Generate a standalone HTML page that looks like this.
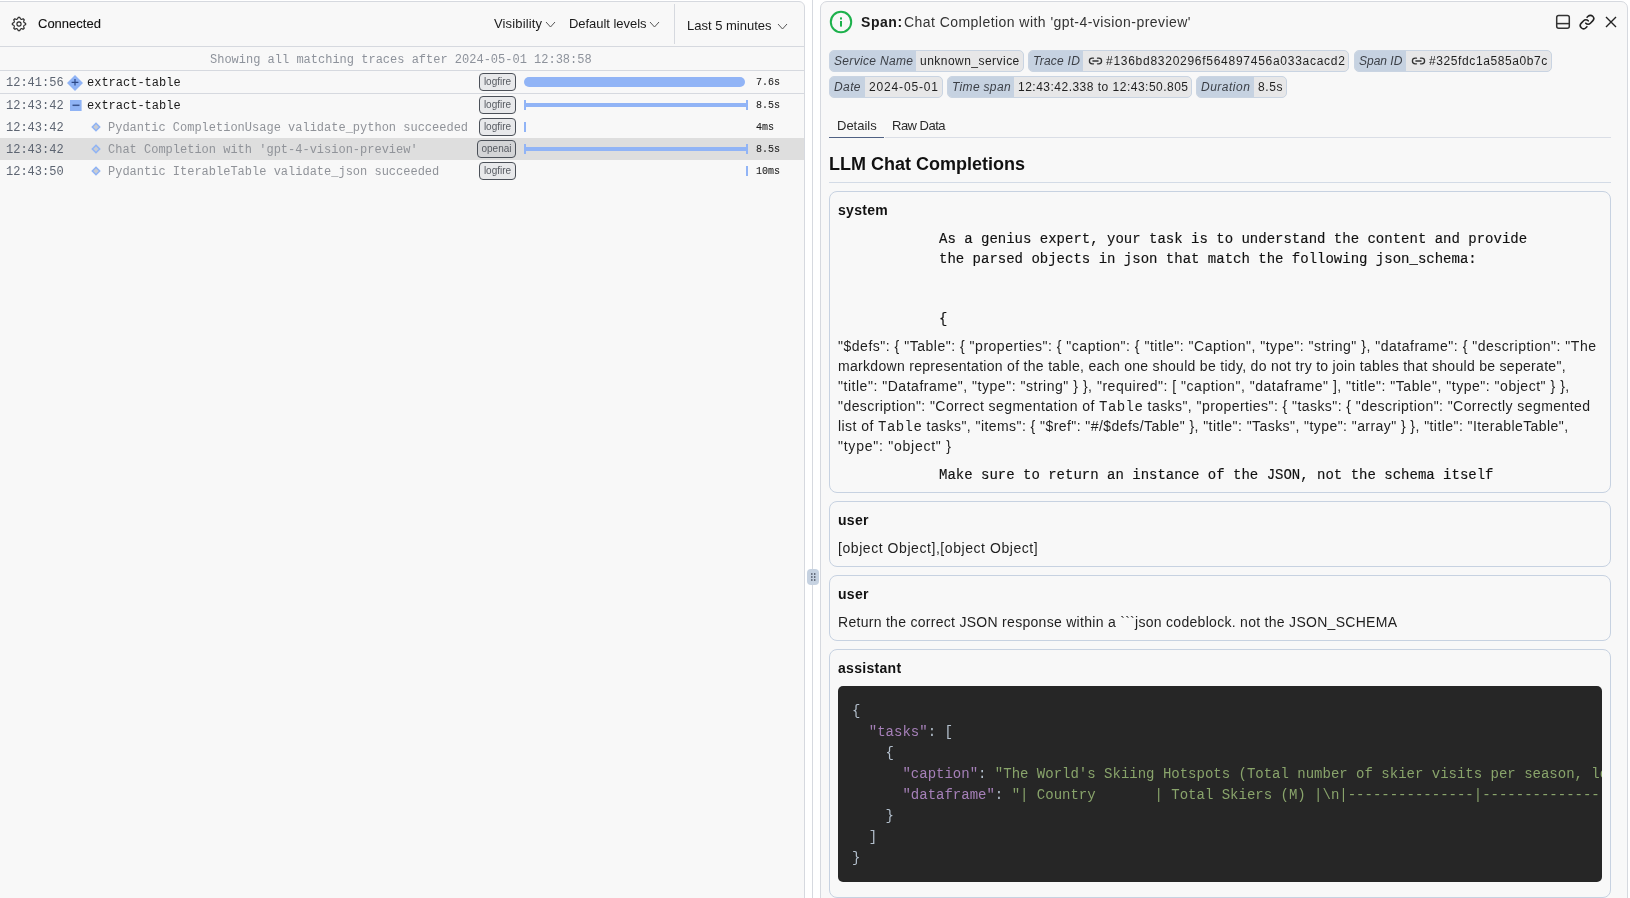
<!DOCTYPE html>
<html><head><meta charset="utf-8">
<style>
*{box-sizing:border-box;margin:0;padding:0}
html,body{width:1630px;height:898px;overflow:hidden;background:#fff;font-family:"Liberation Sans",sans-serif;color:#1f1f1f;position:relative}
.abs{position:absolute}
.mono{font-family:"Liberation Mono",monospace}
.t{position:absolute;white-space:pre;will-change:transform}
</style></head><body>
<div class="abs" style="left:-1px;top:1px;width:806px;height:1000px;border:1px solid #d6d9df;border-radius:0 6px 0 0;background:#f8f8f8"></div>
<div class="abs" style="left:812px;top:0px;width:1px;height:898px;background:#d6d9df"></div>
<div class="abs" style="left:820px;top:1px;width:808px;height:1000px;border:1px solid #d6d9df;border-radius:7px 7px 0 0;background:#f8f8f8"></div>
<div class="abs" style="left:807px;top:569px;width:12px;height:16px;border-radius:4px;background:#c6d2e1"></div>
<svg class="abs" style="left:807px;top:569px" width="12" height="16"><g fill="#3b4250"><rect x="4.1" y="4.3" width="1.4" height="1.4"/><rect x="7.0" y="4.3" width="1.4" height="1.4"/><rect x="4.1" y="7.3" width="1.4" height="1.4"/><rect x="7.0" y="7.3" width="1.4" height="1.4"/><rect x="4.1" y="10.3" width="1.4" height="1.4"/><rect x="7.0" y="10.3" width="1.4" height="1.4"/></g></svg>
<svg class="abs" style="left:9.5px;top:15.4px" width="18" height="18" viewBox="0 0 18 18" fill="none" stroke="#222" stroke-width="1.1" stroke-linejoin="round"><path d="M8.18 2.35A6.7 6.7 0 0 1 9.82 2.35Q10.44 5.54 13.12 3.72A6.7 6.7 0 0 1 14.28 4.88Q12.46 7.56 15.65 8.18A6.7 6.7 0 0 1 15.65 9.82Q12.46 10.44 14.28 13.12A6.7 6.7 0 0 1 13.12 14.28Q10.44 12.46 9.82 15.65A6.7 6.7 0 0 1 8.18 15.65Q7.56 12.46 4.88 14.28A6.7 6.7 0 0 1 3.72 13.12Q5.54 10.44 2.35 9.82A6.7 6.7 0 0 1 2.35 8.18Q5.54 7.56 3.72 4.88A6.7 6.7 0 0 1 4.88 3.72Q7.56 5.54 8.18 2.35Z"/><circle cx="9" cy="9" r="2.1"/></svg>
<div class="t" style="left:38px;top:17.20px;font:normal normal 13px/13px 'Liberation Sans',sans-serif;color:#111;letter-spacing:0px;-webkit-text-stroke:0.1px #111">Connected</div>
<div class="t" style="left:494px;top:17.30px;font:normal normal 13px/13px 'Liberation Sans',sans-serif;color:#1a1a1a;letter-spacing:0.15px;">Visibility</div>
<svg class="abs" style="left:544.5px;top:20.5px" width="11" height="7"><path d="M1 1L5.5 6L10 1" fill="none" stroke="#555" stroke-width="1"/></svg>
<div class="t" style="left:569.4px;top:17.30px;font:normal normal 13px/13px 'Liberation Sans',sans-serif;color:#1a1a1a;letter-spacing:-0.04px;">Default levels</div>
<svg class="abs" style="left:648.5px;top:20.5px" width="11" height="7"><path d="M1 1L5.5 6L10 1" fill="none" stroke="#555" stroke-width="1"/></svg>
<div class="abs" style="left:674px;top:4px;width:1px;height:40px;background:#d6d9df"></div>
<div class="t" style="left:686.5px;top:19.20px;font:normal normal 13px/13px 'Liberation Sans',sans-serif;color:#1a1a1a;letter-spacing:0px;">Last 5 minutes</div>
<svg class="abs" style="left:776.5px;top:23px" width="11" height="7"><path d="M1 1L5.5 6L10 1" fill="none" stroke="#555" stroke-width="1"/></svg>
<div class="abs" style="left:0px;top:46px;width:804px;height:1px;background:#d6d9df"></div>
<div class="t" style="left:210px;top:53.50px;font:normal normal 12px/12px 'Liberation Mono',monospace;color:#8d929b;letter-spacing:0px;">Showing all matching traces after 2024-05-01 12:38:58</div>
<div class="abs" style="left:0px;top:70px;width:804px;height:1px;background:#d6d9df"></div>
<div class="abs" style="left:0px;top:138px;width:804px;height:22px;background:#dedede"></div>
<div class="abs" style="left:0px;top:93px;width:804px;height:1px;background:#d6d9df"></div>
<div class="t" style="left:6px;top:77.40px;font:normal normal 12px/12px 'Liberation Mono',monospace;color:#5d6572;letter-spacing:0px;">12:41:56</div>
<svg class="abs" style="left:67.3px;top:74.5px" width="16" height="16"><path d="M8 0L16 8L8 16L0 8Z" fill="#8fb3f5"/><path d="M4.6 7.4H11.4M8 4V10.6" stroke="#2b4785" stroke-width="1.2"/></svg>
<div class="t" style="left:87.2px;top:77.40px;font:normal normal 12px/12px 'Liberation Mono',monospace;color:#1a1a1a;letter-spacing:0px;">extract-table</div>
<div class="abs" style="left:479px;top:73px;width:37px;height:18px;border:1.5px solid #4b5058;border-radius:4px;background:#e8e9eb;font:10px/15.5px 'Liberation Sans',sans-serif;color:#575b62;text-align:center;will-change:transform">logfire</div>
<div class="abs" style="left:524px;top:77px;width:221px;height:10px;background:#91b4f6;border-radius:5px"></div>
<div class="t" style="left:756px;top:77.83px;font:normal normal 10px/10px 'Liberation Mono',monospace;color:#1f1f1f;letter-spacing:0px;-webkit-text-stroke:0.1px #1f1f1f">7.6s</div>
<div class="t" style="left:6px;top:100.40px;font:normal normal 12px/12px 'Liberation Mono',monospace;color:#5d6572;letter-spacing:0px;">12:43:42</div>
<svg class="abs" style="left:69.5px;top:100px" width="12" height="11"><rect x="0" y="0" width="11.6" height="11" fill="#8fb3f5"/><path d="M2.5 5.3H9.5" stroke="#3a5590" stroke-width="1.5"/></svg>
<div class="t" style="left:87.2px;top:100.40px;font:normal normal 12px/12px 'Liberation Mono',monospace;color:#1a1a1a;letter-spacing:0px;">extract-table</div>
<div class="abs" style="left:479px;top:96px;width:37px;height:18px;border:1.5px solid #4b5058;border-radius:4px;background:#e8e9eb;font:10px/15.5px 'Liberation Sans',sans-serif;color:#575b62;text-align:center;will-change:transform">logfire</div>
<div class="abs" style="left:524px;top:100px;width:2px;height:10px;background:#91b4f6"></div>
<div class="abs" style="left:524px;top:103px;width:224px;height:4px;background:#91b4f6"></div>
<div class="abs" style="left:746px;top:100px;width:2px;height:10px;background:#91b4f6"></div>
<div class="t" style="left:756px;top:100.83px;font:normal normal 10px/10px 'Liberation Mono',monospace;color:#1f1f1f;letter-spacing:0px;-webkit-text-stroke:0.1px #1f1f1f">8.5s</div>
<div class="t" style="left:6px;top:122.40px;font:normal normal 12px/12px 'Liberation Mono',monospace;color:#5d6572;letter-spacing:0px;">12:43:42</div>
<svg class="abs" style="left:90.5px;top:121.5px" width="11" height="11"><path d="M5 1.3L8.7 5L5 8.7L1.3 5Z" fill="#c9ccd2" stroke="#8fb3f5" stroke-width="1.5"/></svg>
<div class="t" style="left:107.5px;top:122.40px;font:normal normal 12px/12px 'Liberation Mono',monospace;color:#909399;letter-spacing:0px;">Pydantic CompletionUsage validate_python succeeded</div>
<div class="abs" style="left:479px;top:118px;width:37px;height:18px;border:1.5px solid #4b5058;border-radius:4px;background:#e8e9eb;font:10px/15.5px 'Liberation Sans',sans-serif;color:#575b62;text-align:center;will-change:transform">logfire</div>
<div class="abs" style="left:524px;top:122px;width:2px;height:10px;background:#91b4f6"></div>
<div class="t" style="left:756px;top:122.83px;font:normal normal 10px/10px 'Liberation Mono',monospace;color:#1f1f1f;letter-spacing:0px;-webkit-text-stroke:0.1px #1f1f1f">4ms</div>
<div class="t" style="left:6px;top:144.40px;font:normal normal 12px/12px 'Liberation Mono',monospace;color:#5d6572;letter-spacing:0px;">12:43:42</div>
<svg class="abs" style="left:90.5px;top:143.5px" width="11" height="11"><path d="M5 1.3L8.7 5L5 8.7L1.3 5Z" fill="#c9ccd2" stroke="#8fb3f5" stroke-width="1.5"/></svg>
<div class="t" style="left:107.5px;top:144.40px;font:normal normal 12px/12px 'Liberation Mono',monospace;color:#909399;letter-spacing:0px;">Chat Completion with 'gpt-4-vision-preview'</div>
<div class="abs" style="left:477px;top:140px;width:39px;height:18px;border:1.5px solid #4b5058;border-radius:4px;background:#d3d4d6;font:10px/15.5px 'Liberation Sans',sans-serif;color:#575b62;text-align:center;will-change:transform">openai</div>
<div class="abs" style="left:524px;top:144px;width:2px;height:10px;background:#91b4f6"></div>
<div class="abs" style="left:524px;top:147px;width:224px;height:4px;background:#91b4f6"></div>
<div class="abs" style="left:746px;top:144px;width:2px;height:10px;background:#91b4f6"></div>
<div class="t" style="left:756px;top:144.84px;font:normal normal 10px/10px 'Liberation Mono',monospace;color:#1f1f1f;letter-spacing:0px;-webkit-text-stroke:0.1px #1f1f1f">8.5s</div>
<div class="t" style="left:6px;top:166.40px;font:normal normal 12px/12px 'Liberation Mono',monospace;color:#5d6572;letter-spacing:0px;">12:43:50</div>
<svg class="abs" style="left:90.5px;top:165.5px" width="11" height="11"><path d="M5 1.3L8.7 5L5 8.7L1.3 5Z" fill="#c9ccd2" stroke="#8fb3f5" stroke-width="1.5"/></svg>
<div class="t" style="left:107.5px;top:166.40px;font:normal normal 12px/12px 'Liberation Mono',monospace;color:#909399;letter-spacing:0px;">Pydantic IterableTable validate_json succeeded</div>
<div class="abs" style="left:479px;top:162px;width:37px;height:18px;border:1.5px solid #4b5058;border-radius:4px;background:#e8e9eb;font:10px/15.5px 'Liberation Sans',sans-serif;color:#575b62;text-align:center;will-change:transform">logfire</div>
<div class="abs" style="left:746px;top:166px;width:2px;height:10px;background:#91b4f6"></div>
<div class="t" style="left:756px;top:166.84px;font:normal normal 10px/10px 'Liberation Mono',monospace;color:#1f1f1f;letter-spacing:0px;-webkit-text-stroke:0.1px #1f1f1f">10ms</div>
<svg class="abs" style="left:829px;top:10px" width="24" height="24"><circle cx="12" cy="12" r="10.2" fill="none" stroke="#1db14c" stroke-width="2"/><rect x="11" y="11" width="2" height="5.6" fill="#1db14c"/><rect x="11" y="7.4" width="2" height="2.1" fill="#1db14c"/></svg>
<div class="t" style="left:861px;top:14.75px;font:normal bold 14px/14px 'Liberation Sans',sans-serif;color:#1a1a1a;letter-spacing:0.55px;">Span:</div>
<div class="t" style="left:904px;top:14.75px;font:normal normal 14px/14px 'Liberation Sans',sans-serif;color:#333;letter-spacing:0.45px;">Chat Completion with 'gpt-4-vision-preview'</div>
<svg class="abs" style="left:1554px;top:13px" width="18" height="18" viewBox="0 0 18 18" fill="none" stroke="#333" stroke-width="1.5"><rect x="2.7" y="2.5" width="12.6" height="12.7" rx="2"/><path d="M2.7 10.6H15.3"/></svg>
<svg class="abs" style="left:1578px;top:13px" width="18" height="18" viewBox="0 0 18 18" fill="none" stroke="#222" stroke-width="1.6" stroke-linecap="round"><path d="M7.8 10.2a3.2 3.2 0 0 0 4.6 0l2.3-2.3a3.2 3.2 0 0 0-4.6-4.6l-1 1"/><path d="M10.2 7.8a3.2 3.2 0 0 0-4.6 0l-2.3 2.3a3.2 3.2 0 0 0 4.6 4.6l1-1"/></svg>
<svg class="abs" style="left:1604px;top:15px" width="14" height="14" viewBox="0 0 14 14" fill="none" stroke="#222" stroke-width="1.4"><path d="M2 2L12 12M12 2L2 12"/></svg>
<div class="abs" style="left:829px;top:50px;width:195px;height:22px;border:1px solid #c9d4e2;border-radius:5px;background:#e7e7e8;overflow:hidden"><div class="abs" style="left:0;top:0;width:86px;height:20px;background:#c6d2e1"></div></div>
<div class="t" style="left:834px;top:54.84px;font:italic normal 12px/12px 'Liberation Sans',sans-serif;color:#3b3f46;letter-spacing:0.33px;">Service Name</div>
<div class="t" style="left:920px;top:54.84px;font:normal normal 12px/12px 'Liberation Sans',sans-serif;color:#1f1f1f;letter-spacing:0.47px;">unknown_service</div>
<div class="abs" style="left:1028px;top:50px;width:321px;height:22px;border:1px solid #c9d4e2;border-radius:5px;background:#e7e7e8;overflow:hidden"><div class="abs" style="left:0;top:0;width:54px;height:20px;background:#c6d2e1"></div></div>
<div class="t" style="left:1033px;top:54.84px;font:italic normal 12px/12px 'Liberation Sans',sans-serif;color:#3b3f46;letter-spacing:0.25px;">Trace ID</div>
<svg class="abs" style="left:1087.5px;top:54px" width="15" height="14" viewBox="0 0 15 14" fill="none" stroke="#333" stroke-width="1.3" stroke-linecap="round"><path d="M5.5 4.2H4.2a2.8 2.8 0 0 0 0 5.6h1.3M9.5 4.2h1.3a2.8 2.8 0 0 1 0 5.6H9.5M4.9 7h5.2"/></svg>
<div class="t" style="left:1106px;top:54.84px;font:normal normal 12px/12px 'Liberation Sans',sans-serif;color:#1f1f1f;letter-spacing:0.73px;">#136bd8320296f564897456a033acacd2</div>
<div class="abs" style="left:1354px;top:50px;width:198px;height:22px;border:1px solid #c9d4e2;border-radius:5px;background:#e7e7e8;overflow:hidden"><div class="abs" style="left:0;top:0;width:51px;height:20px;background:#c6d2e1"></div></div>
<div class="t" style="left:1359px;top:54.84px;font:italic normal 12px/12px 'Liberation Sans',sans-serif;color:#3b3f46;letter-spacing:0px;">Span ID</div>
<svg class="abs" style="left:1410.5px;top:54px" width="15" height="14" viewBox="0 0 15 14" fill="none" stroke="#333" stroke-width="1.3" stroke-linecap="round"><path d="M5.5 4.2H4.2a2.8 2.8 0 0 0 0 5.6h1.3M9.5 4.2h1.3a2.8 2.8 0 0 1 0 5.6H9.5M4.9 7h5.2"/></svg>
<div class="t" style="left:1429px;top:54.84px;font:normal normal 12px/12px 'Liberation Sans',sans-serif;color:#1f1f1f;letter-spacing:0.6px;">#325fdc1a585a0b7c</div>
<div class="abs" style="left:829px;top:76px;width:114px;height:22px;border:1px solid #c9d4e2;border-radius:5px;background:#e7e7e8;overflow:hidden"><div class="abs" style="left:0;top:0;width:35px;height:20px;background:#c6d2e1"></div></div>
<div class="t" style="left:834px;top:80.84px;font:italic normal 12px/12px 'Liberation Sans',sans-serif;color:#3b3f46;letter-spacing:0.4px;">Date</div>
<div class="t" style="left:869px;top:80.84px;font:normal normal 12px/12px 'Liberation Sans',sans-serif;color:#1f1f1f;letter-spacing:0.84px;">2024-05-01</div>
<div class="abs" style="left:947px;top:76px;width:245px;height:22px;border:1px solid #c9d4e2;border-radius:5px;background:#e7e7e8;overflow:hidden"><div class="abs" style="left:0;top:0;width:66px;height:20px;background:#c6d2e1"></div></div>
<div class="t" style="left:952px;top:80.84px;font:italic normal 12px/12px 'Liberation Sans',sans-serif;color:#3b3f46;letter-spacing:0.33px;">Time span</div>
<div class="t" style="left:1018px;top:80.84px;font:normal normal 12px/12px 'Liberation Sans',sans-serif;color:#1f1f1f;letter-spacing:0.49px;">12:43:42.338 to 12:43:50.805</div>
<div class="abs" style="left:1196px;top:76px;width:91px;height:22px;border:1px solid #c9d4e2;border-radius:5px;background:#e7e7e8;overflow:hidden"><div class="abs" style="left:0;top:0;width:57px;height:20px;background:#c6d2e1"></div></div>
<div class="t" style="left:1201px;top:80.84px;font:italic normal 12px/12px 'Liberation Sans',sans-serif;color:#3b3f46;letter-spacing:0.5px;">Duration</div>
<div class="t" style="left:1258px;top:80.84px;font:normal normal 12px/12px 'Liberation Sans',sans-serif;color:#1f1f1f;letter-spacing:0.6px;">8.5s</div>
<div class="t" style="left:837px;top:119.30px;font:normal normal 13px/13px 'Liberation Sans',sans-serif;color:#2a2a2a;letter-spacing:0px;">Details</div>
<div class="t" style="left:892px;top:119.30px;font:normal normal 13px/13px 'Liberation Sans',sans-serif;color:#2a2a2a;letter-spacing:-0.5px;">Raw Data</div>
<div class="abs" style="left:885px;top:137px;width:726px;height:1px;background:#dadee6"></div>
<div class="abs" style="left:829px;top:137px;width:55px;height:1px;background:#4f6183"></div>
<div class="t" style="left:829px;top:154.76px;font:normal bold 18px/18px 'Liberation Sans',sans-serif;color:#111;letter-spacing:0px;">LLM Chat Completions</div>
<div class="abs" style="left:829px;top:182px;width:782px;height:1px;background:#d3dbe6"></div>
<div class="abs" style="left:829px;top:191px;width:782px;height:302px;border:1px solid #c7d2e1;border-radius:8px"></div>
<div class="t" style="left:838px;top:203.15px;font:normal bold 14px/14px 'Liberation Sans',sans-serif;color:#111;letter-spacing:0.3px;">system</div>
<div class="t" style="left:938.6px;top:232.17px;font:normal normal 14px/14px 'Liberation Mono',monospace;color:#111;letter-spacing:0px;-webkit-text-stroke:0.15px #111">As a genius expert, your task is to understand the content and provide</div>
<div class="t" style="left:938.6px;top:252.07px;font:normal normal 14px/14px 'Liberation Mono',monospace;color:#111;letter-spacing:0px;-webkit-text-stroke:0.15px #111">the parsed objects in json that match the following json_schema:</div>
<div class="t" style="left:938.6px;top:312.07px;font:normal normal 14px/14px 'Liberation Mono',monospace;color:#111;letter-spacing:0px;-webkit-text-stroke:0.15px #111">{</div>
<div class="t" style="left:838px;top:338.65px;font:normal normal 14px/14px 'Liberation Sans',sans-serif;color:#1f1f1f;letter-spacing:0.514px;">"$defs": { "Table": { "properties": { "caption": { "title": "Caption", "type": "string" }, "dataframe": { "description": "The</div>
<div class="t" style="left:838px;top:358.75px;font:normal normal 14px/14px 'Liberation Sans',sans-serif;color:#1f1f1f;letter-spacing:0.302px;">markdown representation of the table, each one should be tidy, do not try to join tables that should be seperate",</div>
<div class="t" style="left:838px;top:378.85px;font:normal normal 14px/14px 'Liberation Sans',sans-serif;color:#1f1f1f;letter-spacing:0.524px;">"title": "Dataframe", "type": "string" } }, "required": [ "caption", "dataframe" ], "title": "Table", "type": "object" } },</div>
<div class="t" style="left:838px;top:398.95px;font:normal normal 14px/14px 'Liberation Sans',sans-serif;color:#1f1f1f;letter-spacing:0.435px;">"description": "Correct segmentation of <span class="mono">Table</span> tasks", "properties": { "tasks": { "description": "Correctly segmented</div>
<div class="t" style="left:838px;top:419.05px;font:normal normal 14px/14px 'Liberation Sans',sans-serif;color:#1f1f1f;letter-spacing:0.436px;">list of <span class="mono">Table</span> tasks", "items": { "$ref": "#/$defs/Table" }, "title": "Tasks", "type": "array" } }, "title": "IterableTable",</div>
<div class="t" style="left:838px;top:439.15px;font:normal normal 14px/14px 'Liberation Sans',sans-serif;color:#1f1f1f;letter-spacing:0.756px;">"type": "object" }</div>
<div class="t" style="left:938.6px;top:468.27px;font:normal normal 14px/14px 'Liberation Mono',monospace;color:#111;letter-spacing:0px;-webkit-text-stroke:0.15px #111">Make sure to return an instance of the JSON, not the schema itself</div>
<div class="abs" style="left:829px;top:501px;width:782px;height:66px;border:1px solid #c7d2e1;border-radius:8px"></div>
<div class="t" style="left:838px;top:513.25px;font:normal bold 14px/14px 'Liberation Sans',sans-serif;color:#111;letter-spacing:0.3px;">user</div>
<div class="t" style="left:838px;top:540.75px;font:normal normal 14px/14px 'Liberation Sans',sans-serif;color:#1f1f1f;letter-spacing:0.56px;">[object Object],[object Object]</div>
<div class="abs" style="left:829px;top:575px;width:782px;height:66px;border:1px solid #c7d2e1;border-radius:8px"></div>
<div class="t" style="left:838px;top:587.05px;font:normal bold 14px/14px 'Liberation Sans',sans-serif;color:#111;letter-spacing:0.3px;">user</div>
<div class="t" style="left:838px;top:614.75px;font:normal normal 14px/14px 'Liberation Sans',sans-serif;color:#1f1f1f;letter-spacing:0.29px;">Return the correct JSON response within a ```json codeblock. not the JSON_SCHEMA</div>
<div class="abs" style="left:829px;top:649px;width:782px;height:249px;border:1px solid #c7d2e1;border-radius:8px"></div>
<div class="t" style="left:838px;top:660.85px;font:normal bold 14px/14px 'Liberation Sans',sans-serif;color:#111;letter-spacing:0.3px;">assistant</div>
<div class="abs" style="left:838px;top:686px;width:764px;height:196px;background:#262626;border-radius:5px;overflow:hidden">
<div class="t" style="left:14.2px;top:18.47px;font:14px/14px 'Liberation Mono',monospace;color:#b3bfcc"><span style="color:#b3bfcc">{</span></div>
<div class="t" style="left:14.2px;top:39.37px;font:14px/14px 'Liberation Mono',monospace;color:#b3bfcc">  <span style="color:#a680b9">"tasks"</span><span style="color:#b3bfcc">: [</span></div>
<div class="t" style="left:14.2px;top:60.27px;font:14px/14px 'Liberation Mono',monospace;color:#b3bfcc">    <span style="color:#b3bfcc">{</span></div>
<div class="t" style="left:14.2px;top:81.17px;font:14px/14px 'Liberation Mono',monospace;color:#b3bfcc">      <span style="color:#a680b9">"caption"</span><span style="color:#b3bfcc">: </span><span style="color:#89a46b">"The World's Skiing Hotspots (Total number of skier visits per season, less than 1 million)"</span></div>
<div class="t" style="left:14.2px;top:101.97px;font:14px/14px 'Liberation Mono',monospace;color:#b3bfcc">      <span style="color:#a680b9">"dataframe"</span><span style="color:#b3bfcc">: </span><span style="color:#89a46b">"| Country       | Total Skiers (M) |\n|---------------|------------------|\n"</span></div>
<div class="t" style="left:14.2px;top:122.87px;font:14px/14px 'Liberation Mono',monospace;color:#b3bfcc">    <span style="color:#b3bfcc">}</span></div>
<div class="t" style="left:14.2px;top:143.77px;font:14px/14px 'Liberation Mono',monospace;color:#b3bfcc">  <span style="color:#b3bfcc">]</span></div>
<div class="t" style="left:14.2px;top:164.67px;font:14px/14px 'Liberation Mono',monospace;color:#b3bfcc"><span style="color:#b3bfcc">}</span></div>
</div>
</body></html>
